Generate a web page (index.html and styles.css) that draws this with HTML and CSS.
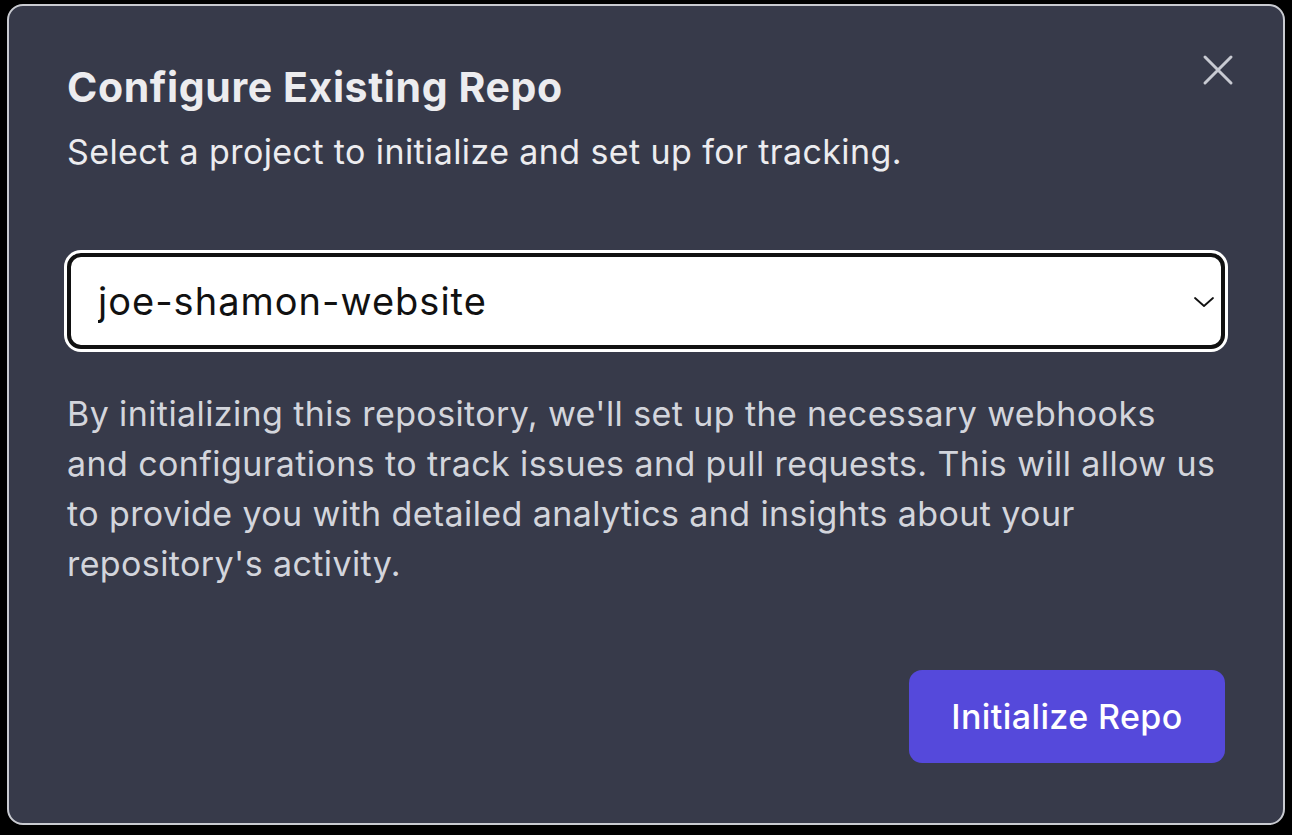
FILE: index.html
```html
<!DOCTYPE html>
<html lang="en">
<head>
    <meta charset="UTF-8">
    <meta name="viewport" content="width=device-width, initial-scale=1.0">
    <title>Configure Existing Repo</title>
    <link rel="stylesheet" href="styles.css">
</head>
<body>
    <div class="modal">
        <button class="close-btn" aria-label="Close">
            <svg width="34" height="34" viewBox="0 0 34 34" fill="none" stroke="currentColor" stroke-width="3" stroke-linecap="round">
                <path d="M4 4 L30 30 M30 4 L4 30"/>
            </svg>
        </button>
        <h1 class="title">Configure Existing Repo</h1>
        <p class="subtitle">Select a project to initialize and set up for tracking.</p>

        <div class="select-wrap">
            <select class="repo-select">
                <option>joe-shamon-website</option>
            </select>
            <svg class="chevron" width="22" height="12" viewBox="0 0 22 12" fill="none" stroke="#111" stroke-width="1.8" stroke-linecap="round" stroke-linejoin="round">
                <path d="M2 2 L11 10 L20 2"/>
            </svg>
        </div>

        <p class="info">By initializing this repository, we'll set up the necessary webhooks and configurations to track issues and pull requests. This will allow us to provide you with detailed analytics and insights about your repository's activity.</p>

        <div class="actions">
            <button class="init-btn">Initialize Repo</button>
        </div>
    </div>
</body>
</html>
```

FILE: styles.css
```css
body {
    margin: 0;
    padding: 0;
    background-color: #000;
    font-family: 'Inter', 'Noto Sans', sans-serif;
    height: 835px;
    overflow: hidden;
}
.modal {
    position: relative;
    margin: 4px 0 0 7px;
    width: 1278px;
    height: 821px;
    box-sizing: border-box;
    background-color: #373a4a;
    border: 2px solid #c9cbd1;
    border-radius: 16px;
    padding: 57px 58px 58px;
    display: flex;
    flex-direction: column;
}
.close-btn {
    position: absolute;
    top: 47px;
    right: 48px;
    background: none;
    border: none;
    padding: 0;
    color: #c8cad2;
    cursor: pointer;
    display: flex;
}
.title {
    margin: 0;
    font-size: 41px;
    font-weight: 700;
    color: #ececef;
    line-height: 48px;
    letter-spacing: 0.6px;
}
.subtitle {
    margin: 17px 0 0;
    font-size: 34px;
    color: #ececef;
    line-height: 48px;
    letter-spacing: 0.4px;
}
.select-wrap {
    position: relative;
    margin-top: 77px;
}
.repo-select {
    appearance: none;
    -webkit-appearance: none;
    width: 100%;
    height: 96px;
    box-sizing: border-box;
    background-color: #fff;
    border: 4px solid #111;
    border-radius: 14px;
    box-shadow: 0 0 0 3px #fff;
    padding: 0 27px;
    font-family: 'Inter', 'Noto Sans', sans-serif;
    font-size: 38px;
    letter-spacing: 1px;
    color: #111;
    outline: none;
}
.chevron {
    position: absolute;
    right: 10px;
    top: 43px;
    pointer-events: none;
}
.info {
    margin: 40px 0 0;
    font-size: 34px;
    line-height: 50px;
    letter-spacing: 0.4px;
    color: #d3d5dc;
}
.actions {
    margin-top: auto;
    display: flex;
    justify-content: flex-end;
    padding-bottom: 2px;
}
.init-btn {
    background-color: #5549db;
    color: #fff;
    border: none;
    border-radius: 13px;
    width: 316px;
    height: 93px;
    font-family: 'Inter', 'Noto Sans', sans-serif;
    font-size: 34px;
    font-weight: 500;
    letter-spacing: 0.4px;
    cursor: pointer;
}
```
